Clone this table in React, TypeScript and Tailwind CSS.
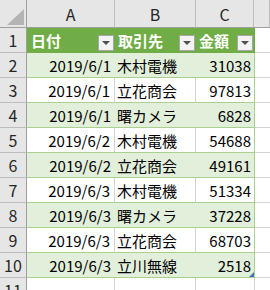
import React from 'react';

const rows = [
  { date: '2019/6/1', client: '木村電機', amount: 31038 },
  { date: '2019/6/1', client: '立花商会', amount: 97813 },
  { date: '2019/6/1', client: '曙カメラ', amount: 6828 },
  { date: '2019/6/2', client: '木村電機', amount: 54688 },
  { date: '2019/6/2', client: '立花商会', amount: 49161 },
  { date: '2019/6/3', client: '木村電機', amount: 51334 },
  { date: '2019/6/3', client: '曙カメラ', amount: 37228 },
  { date: '2019/6/3', client: '立花商会', amount: 68703 },
  { date: '2019/6/3', client: '立川無線', amount: 2518 },
];

const font = { fontFamily: '"Noto Sans CJK JP", "Noto Sans", sans-serif' };

function FilterButton() {
  return (
    <div className="absolute right-[1px] bottom-[1px] w-[16px] h-[16px] bg-[#f3f3f3] border border-[#a6a6a6] flex items-center justify-center">
      <svg width="8" height="5" viewBox="0 0 8 5">
        <path d="M0 0 L8 0 L4 4 Z" fill="#505050" />
      </svg>
    </div>
  );
}

export default function App() {
  return (
    <div className="w-[270px] h-[290px] overflow-hidden bg-white text-[15px] text-black leading-none" style={font}>
      {/* column headers */}
      <div className="flex h-[28px]">
        <div className="w-[27px] shrink-0 bg-[#e6e6e6] border-r border-b border-[#9e9e9e] flex items-end justify-end p-[2px]">
          <svg width="17" height="16" viewBox="0 0 17 16">
            <path d="M17 0 L17 16 L0 16 Z" fill="#b4b4b4" />
          </svg>
        </div>
        {[
          { l: 'A', w: 'w-[88px]' },
          { l: 'B', w: 'w-[81px]' },
          { l: 'C', w: 'w-[58px]' },
          { l: '', w: 'flex-1' },
        ].map((c, i) => (
          <div
            key={i}
            className={`${c.w} shrink-0 bg-[#e6e6e6] border-r border-b border-r-[#bdbdbd] border-b-[#9e9e9e] flex items-center justify-center text-[#262626] text-[16px]`}
          >
            {c.l}
          </div>
        ))}
      </div>

      {/* table header row */}
      <div className="flex h-[25px]">
        <div className="w-[27px] shrink-0 bg-[#e6e6e6] border-r border-b border-r-[#9e9e9e] border-b-[#bdbdbd] flex items-center justify-center text-[#262626] text-[16px]">
          1
        </div>
        <div className="w-[88px] shrink-0 relative bg-[#70ad47] border-b border-[#70ad47] flex items-center pl-[4px] text-white font-bold">
          日付
          <FilterButton />
        </div>
        <div className="w-[81px] shrink-0 relative bg-[#70ad47] border-b border-[#70ad47] flex items-center pl-[3px] text-white font-bold">
          取引先
          <FilterButton />
        </div>
        <div className="w-[59px] shrink-0 relative bg-[#70ad47] border-b border-r border-[#70ad47] flex items-center pl-[3px] text-white font-bold">
          金額
          <FilterButton />
        </div>
        <div className="flex-1 border-b border-[#d4d4d4]" />
      </div>

      {rows.map((r, i) => {
        const band = i % 2 === 0;
        const last = i === rows.length - 1;
        return (
          <div key={i} className="flex h-[25px]">
            <div className="w-[27px] shrink-0 bg-[#e6e6e6] border-r border-b border-r-[#9e9e9e] border-b-[#bdbdbd] flex items-center justify-center text-[#262626] text-[16px]">
              {i + 2}
            </div>
            <div
              className={`w-[88px] shrink-0 border-b border-b-[#a9d08e] flex items-center justify-end pr-[4px] ${
                band ? 'bg-[#e2efda]' : 'bg-white border-r border-r-[#d4d4d4]'
              }`}
            >
              {r.date}
            </div>
            <div
              className={`w-[81px] shrink-0 border-b border-b-[#a9d08e] flex items-center pl-[2px] ${
                band ? 'bg-[#e2efda]' : 'bg-white border-r border-r-[#d4d4d4]'
              }`}
            >
              {r.client}
            </div>
            <div
              className={`w-[59px] shrink-0 relative border-b border-r border-[#a9d08e] flex items-center justify-end pr-[3px] ${
                band ? 'bg-[#e2efda]' : 'bg-white'
              }`}
            >
              {r.amount}
              {last && (
                <svg className="absolute right-0 bottom-0" width="5" height="5" viewBox="0 0 5 5">
                  <path d="M5 0 L5 5 L0 5 Z" fill="#4472c4" />
                </svg>
              )}
            </div>
            <div className="flex-1 border-b border-[#d4d4d4]" />
          </div>
        );
      })}

      {/* row 11 */}
      <div className="flex h-[25px]">
        <div className="w-[27px] shrink-0 bg-[#e6e6e6] border-r border-b border-r-[#9e9e9e] border-b-[#bdbdbd] flex items-center justify-center text-[#262626] text-[16px]">
          11
        </div>
        <div className="w-[88px] shrink-0 border-r border-b border-[#d4d4d4]" />
        <div className="w-[81px] shrink-0 border-r border-b border-[#d4d4d4]" />
        <div className="w-[59px] shrink-0 border-r border-b border-[#d4d4d4]" />
        <div className="flex-1 border-b border-[#d4d4d4]" />
      </div>
    </div>
  );
}
